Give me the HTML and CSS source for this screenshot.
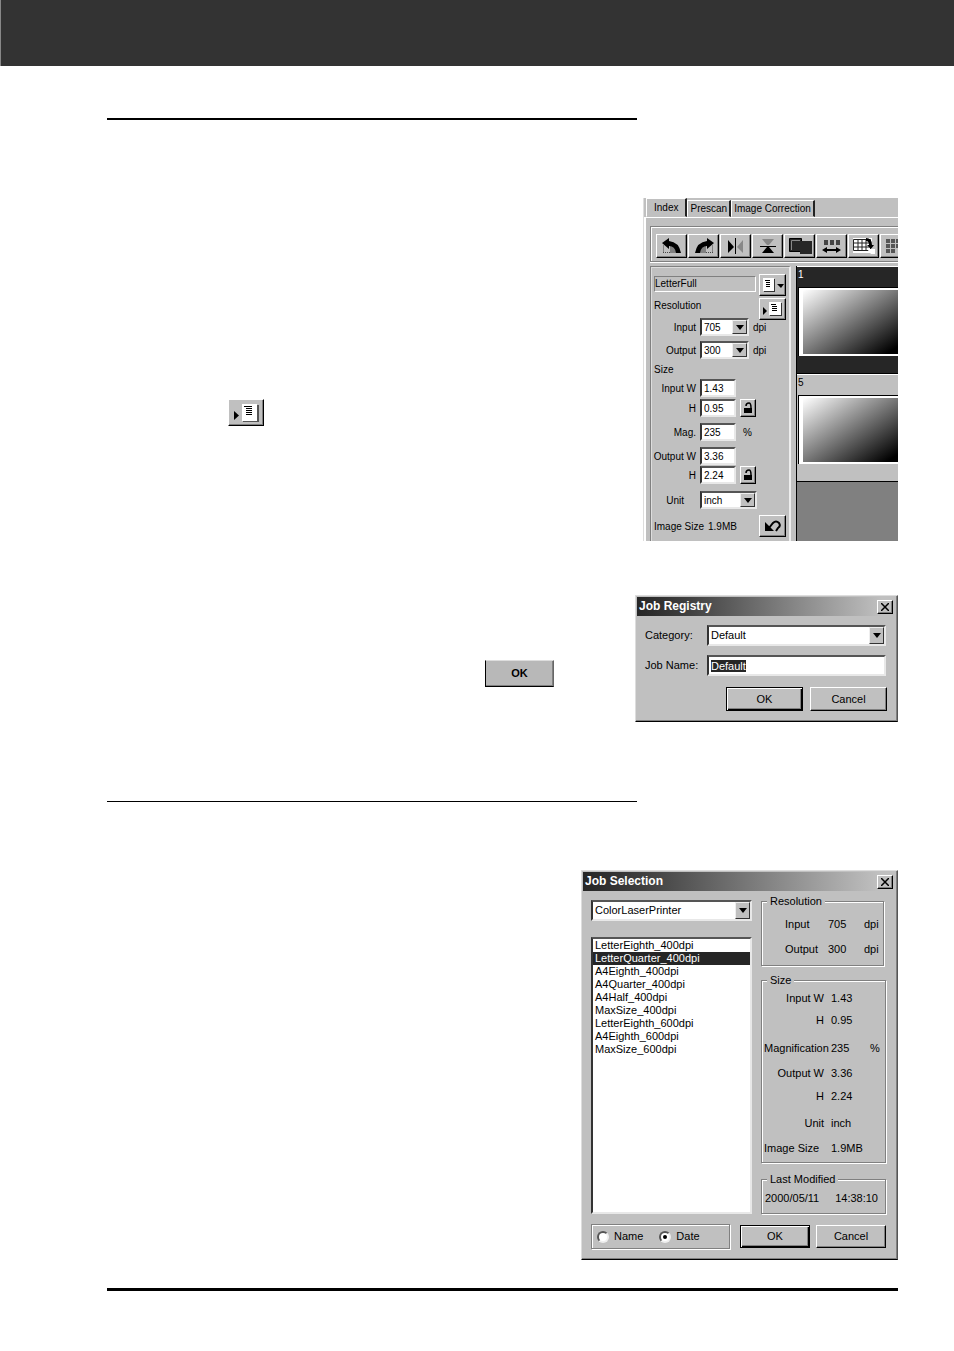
FILE: index.html
```html
<!DOCTYPE html>
<html lang="en">
<head>
    <meta charset="UTF-8">
    <meta name="viewport" content="width=device-width, initial-scale=1.0">
    <title>Job Registry / Job Selection</title>
    <link rel="stylesheet" href="styles.css">
</head>
<body>
    <header class="page-header"></header>

    <main class="page">
        <hr class="rule rule-heading">

        <section class="row row-scan">
            <div class="column">
                <button class="button job-button" aria-label="Job registry">
                    <svg width="28" height="20" viewBox="0 0 28 20"><path d="M2 8v9l5-4.500z" fill="#000"/><path d="M10 1h15v17H10z" fill="#fff"/><path d="M25 2h2v17H11v-1h14z" fill="#555"/><path d="M12 3.500h8M14 5.500h6M14 7.500h6M14 9.500h6M14 11.500h6" stroke="#000"/></svg>
                </button>
            </div>

            <div class="scanner">
                <nav class="tabs">
                    <button class="tab tab-active">Index</button>
                    <button class="tab">Prescan</button>
                    <button class="tab">Image Correction</button>
                </nav>
                <div class="workspace">
                    <div class="toolbar">
                        <button class="button tool" aria-label="Rotate left">
                            <svg width="20" height="16" viewBox="0 0 20 16"><path d="M8 15V7q6 1 7 8z" fill="#808080"/><path d="M1.500 14.500V6.500M1 14.500h7" stroke="#444" stroke-dasharray="1 1"/><path d="M0 5l7-5v3q10 1 12 12h-5q-1-7-7-7v3z"/></svg>
                        </button>
                        <button class="button tool" aria-label="Rotate right">
                            <svg width="20" height="16" viewBox="0 0 20 16"><path d="M12 15V7q-6 1-7 8z" fill="#808080"/><path d="M18.500 14.500V6.500M19 14.500h-7" stroke="#444" stroke-dasharray="1 1"/><path d="M20 5l-7-5v3Q3 4 1 15h5q1-7 7-7v3z"/></svg>
                        </button>
                        <button class="button tool" aria-label="Flip horizontally">
                            <svg width="20" height="16" viewBox="0 0 20 16"><path d="M2 2v13l6-6z"/><path d="M17 2v13l-6-6z" fill="#888"/><path d="M9.500 0v16" stroke="#000"/></svg>
                        </button>
                        <button class="button tool" aria-label="Flip vertically">
                            <svg width="20" height="16" viewBox="0 0 20 16"><path d="M4 1h12l-5 6H9z" fill="#888"/><path d="M4 15h12l-5-6H9z"/><path d="M2 8.500h16" stroke="#000"/></svg>
                        </button>
                        <button class="button tool" aria-label="Negative and positive">
                            <svg width="24" height="18" viewBox="0 0 24 18"><path d="M1.500 1.500h12v13h-12z" fill="#262626" stroke="#000"/><path d="M3.500 13V3.500H12" stroke="#888" fill="none"/><path d="M12 4h12v13H12z" fill="#262626"/></svg>
                        </button>
                        <button class="button tool" aria-label="Order">
                            <svg width="20" height="16" viewBox="0 0 20 16"><path d="M2 2h4v5H2zM8 2h4v5H8zM14 2h4v5h-4z" fill="#444"/><path d="M0 12l5-3v2h9V9l5 3-5 3v-2H5v2z"/></svg>
                        </button>
                        <button class="button tool" aria-label="Select all">
                            <svg width="24" height="18" viewBox="0 0 24 18"><path d="M1 1h19v15H1z" fill="#fff"/><path d="M1.500 2.500h17v11h-17zM6 2v12M10 2v12M14 2v12M1 6h18M1 10h18" fill="none" stroke="#222"/><path d="M14 1q6 0 6 7h2l-3 4-4-4h2q0-4-3-4z"/><path d="M15 12h8v5h-4z" fill="#fff"/></svg>
                        </button>
                        <button class="button tool" aria-label="Deselect">
                            <svg width="22" height="16" viewBox="0 0 22 16"><path d="M1 1h4v4H1zM6 1h4v4H6zM11 1h4v4h-4zM1 6h4v4H1zM6 6h4v4H6zM11 6h4v4h-4zM1 11h4v4H1zM6 11h4v4H6z" fill="#555"/></svg>
                        </button>
                    </div>

                    <div class="panes">
                        <div class="settings">
                            <div class="settings-top">
                                <div class="settings-name">
                                    <div class="job-name">LetterFull</div>
                                    <div>Resolution</div>
                                </div>
                                <div class="settings-buttons">
                                    <button class="button small-button" aria-label="Job list">
                                        <svg width="24" height="16" viewBox="0 0 24 16"><path d="M2 1h11v13H2z" fill="#fff"/><path d="M13 2h1v13H3v-1h10z" fill="#333"/><path d="M4 3.500h5M5 5.500h4M5 7.500h4M5 9.500h4" stroke="#000"/><path d="M16 7h7l-3 4z"/></svg>
                                    </button>
                                    <button class="button small-button" aria-label="Register job">
                                        <svg width="24" height="16" viewBox="0 0 24 16"><path d="M2 6v8l4-4z"/><path d="M8 1h12v13H8z" fill="#fff"/><path d="M20 2h1v13H9v-1h11z" fill="#333"/><path d="M10 3.500h5M11 5.500h5M11 7.500h5M11 9.500h5" stroke="#000"/></svg>
                                    </button>
                                </div>
                            </div>

                            <div class="settings-grid">
                                <label for="input-dpi">Input</label>
                                <span class="select select-short"><select id="input-dpi"><option>705</option></select><i class="arrow"></i></span>
                                <span>dpi</span>

                                <label for="output-dpi">Output</label>
                                <span class="select select-short"><select id="output-dpi"><option>300</option></select><i class="arrow"></i></span>
                                <span>dpi</span>

                                <span class="subtitle">Size</span>

                                <label for="input-w">Input W</label>
                                <input id="input-w" class="field" value="1.43">
                                <span></span>

                                <label for="input-h">H</label>
                                <input id="input-h" class="field" value="0.95">
                                <button class="button lock" aria-label="Lock input size">
                                    <svg width="10" height="12" viewBox="0 0 10 12"><path d="M1 6h8v5H1z"/><path d="M3 4q0-3 3-3 2 0 2 5" fill="none" stroke="#000" stroke-width="1.500"/></svg>
                                </button>

                                <label for="mag">Mag.</label>
                                <input id="mag" class="field" value="235">
                                <span class="percent">%</span>

                                <label for="output-w">Output W</label>
                                <input id="output-w" class="field" value="3.36">
                                <span></span>

                                <label for="output-h">H</label>
                                <input id="output-h" class="field" value="2.24">
                                <button class="button lock" aria-label="Lock output size">
                                    <svg width="10" height="12" viewBox="0 0 10 12"><path d="M1 6h8v5H1z"/><path d="M3 4q0-3 3-3 2 0 2 5" fill="none" stroke="#000" stroke-width="1.500"/></svg>
                                </button>

                                <label for="unit" class="unit-label">Unit</label>
                                <span class="select select-unit"><select id="unit"><option>inch</option></select><i class="arrow"></i></span>
                            </div>

                            <div class="image-size">
                                <span>Image Size</span>
                                <span>1.9MB</span>
                                <button class="button small-button undo" aria-label="Reset">
                                    <svg width="18" height="14" viewBox="0 0 18 14"><path d="M1 3v9h9z"/><path d="M5 9l4-5q3-3 6 0 2 3-1 5l-2 3" fill="none" stroke="#000" stroke-width="2"/></svg>
                                </button>
                            </div>
                        </div>

                        <div class="thumbs">
                            <div class="thumb thumb-selected">
                                <span>1</span>
                                <div class="frame"><div class="gradient"></div></div>
                            </div>
                            <div class="thumb">
                                <span>5</span>
                                <div class="frame"><div class="gradient"></div></div>
                            </div>
                        </div>
                    </div>
                </div>
            </div>
        </section>

        <section class="row row-registry">
            <div class="column column-end">
                <button class="button ok-button">OK</button>
            </div>

            <form class="dialog registry">
                <div class="titlebar">
                    <h2>Job Registry</h2>
                    <button type="button" class="button close" aria-label="Close">
                        <svg width="8" height="8" viewBox="0 0 8 8"><path d="M0 0l8 8M8 0L0 8" stroke="#000" stroke-width="1.500"/></svg>
                    </button>
                </div>
                <div class="registry-grid">
                    <label for="category">Category:</label>
                    <span class="select"><select id="category"><option>Default</option></select><i class="arrow"></i></span>
                    <label for="job-name">Job Name:</label>
                    <input id="job-name" class="field field-selected" value="Default">
                </div>
                <div class="actions">
                    <button type="button" class="button default">OK</button>
                    <button type="button" class="button">Cancel</button>
                </div>
            </form>
        </section>

        <hr class="rule rule-thin">

        <section class="row row-selection">
            <form class="dialog selection">
                <div class="titlebar">
                    <h2>Job Selection</h2>
                    <button type="button" class="button close" aria-label="Close">
                        <svg width="8" height="8" viewBox="0 0 8 8"><path d="M0 0l8 8M8 0L0 8" stroke="#000" stroke-width="1.500"/></svg>
                    </button>
                </div>
                <div class="selection-body">
                    <div class="jobs">
                        <span class="select"><select aria-label="Category"><option>ColorLaserPrinter</option></select><i class="arrow"></i></span>
                        <select class="list" size="9" aria-label="Jobs">
                            <option>LetterEighth_400dpi</option>
                            <option selected>LetterQuarter_400dpi</option>
                            <option>A4Eighth_400dpi</option>
                            <option>A4Quarter_400dpi</option>
                            <option>A4Half_400dpi</option>
                            <option>MaxSize_400dpi</option>
                            <option>LetterEighth_600dpi</option>
                            <option>A4Eighth_600dpi</option>
                            <option>MaxSize_600dpi</option>
                        </select>
                    </div>
                    <div class="details">
                        <fieldset class="group group-resolution">
                            <legend>Resolution</legend>
                            <div class="resolution-grid">
                                <span>Input</span><span>705</span><span>dpi</span>
                                <span>Output</span><span>300</span><span>dpi</span>
                            </div>
                        </fieldset>
                        <fieldset class="group group-size">
                            <legend>Size</legend>
                            <div class="size-grid">
                                <span class="label">Input W</span><span>1.43</span><span></span>
                                <span class="label">H</span><span>0.95</span><span></span>
                                <span>Magnification</span><span>235</span><span>%</span>
                                <span class="label">Output W</span><span>3.36</span><span></span>
                                <span class="label">H</span><span>2.24</span><span></span>
                                <span class="label">Unit</span><span>inch</span><span></span>
                                <span>Image Size</span><span>1.9MB</span><span></span>
                            </div>
                        </fieldset>
                        <fieldset class="group">
                            <legend>Last Modified</legend>
                            <div class="modified"><span>2000/05/11</span><span>14:38:10</span></div>
                        </fieldset>
                    </div>
                </div>
                <div class="selection-footer">
                    <div class="sort">
                        <label><input type="radio" name="sort">Name</label>
                        <label><input type="radio" name="sort" checked>Date</label>
                    </div>
                    <button type="button" class="button default">OK</button>
                    <button type="button" class="button">Cancel</button>
                </div>
            </form>
        </section>

        <hr class="rule rule-footer">
    </main>

    <script>
        // the job name starts out selected, ready to be overwritten
        document.getElementById('job-name').select();
    </script>
</body>
</html>
```
FILE: styles.css
```css
* {
    box-sizing: border-box;
}
body {
    margin: 0;
    background-color: #fff;
    color: #000;
    font-family: "Liberation Sans", Arial, sans-serif;
    font-size: 11px;
    line-height: 13px;
}
button, input, select {
    font: inherit;
    color: inherit;
    margin: 0;
    outline: none;
}
svg {
    display: block;
    flex: none;
}

/* page */
.page-header {
    height: 66px;
    background-color: #333;
    border-left: 1px solid #888;
}
.page {
    padding: 52px 56px 60px 107px;
}
.rule {
    margin: 0;
    border: 0;
    background-color: #000;
}
.rule-heading {
    width: 67%;
    height: 2px;
}
.rule-thin {
    width: 67%;
    height: 1px;
    margin-top: 79px;
}
.rule-footer {
    height: 3px;
    margin-top: 28px;
}
.row {
    display: flex;
    justify-content: flex-end;
}
.row-scan {
    margin-top: 78px;
}
.row-registry {
    margin-top: 54px;
}
.row-selection {
    margin-top: 68px;
}
.column {
    flex: 1;
    display: flex;
    align-items: flex-start;
    padding: 201px 0 0 121px;
}
.column-end {
    justify-content: flex-end;
    padding: 65px 81px 0 0;
}

/* controls */
.button {
    display: flex;
    align-items: center;
    justify-content: center;
    padding: 0;
    background-color: #c0c0c0;
    border: 1px solid;
    border-color: #fff #000 #000 #fff;
    border-radius: 0;
    box-shadow: inset -1px -1px 0 #808080;
}
.job-button {
    width: 36px;
    height: 27px;
}
.ok-button {
    width: 69px;
    height: 27px;
    border-color: #ddd #666 #000 #000;
    background-color: #b8b8b8;
    font-weight: bold;
}
.field, .select select {
    width: 100%;
    height: 18px;
    padding: 0 2px;
    background-color: #fff;
    border: 2px solid;
    border-color: #555 #e8e8e8 #e8e8e8 #333;
    border-radius: 0;
    appearance: none;
}
.select {
    position: relative;
    display: block;
}
.select select {
    display: block;
}
.arrow {
    position: absolute;
    top: 2px;
    right: 2px;
    bottom: 2px;
    width: 15px;
    display: flex;
    align-items: center;
    justify-content: center;
    background-color: #c0c0c0;
    border: 1px solid;
    border-color: #eee #333 #333 #eee;
    pointer-events: none;
}
.arrow::before {
    content: "";
    border: 4px solid transparent;
    border-top: 5px solid #000;
    border-bottom: 0;
}

/* scanner window */
.scanner {
    width: 255px;
    height: 343px;
    overflow: hidden;
    background-color: #c0c0c0;
    border-left: 1px solid #ddd;
    font-size: 10px;
}
.tabs {
    display: flex;
    align-items: flex-end;
    height: 19px;
    padding-left: 2px;
}
.tab {
    height: 17px;
    padding: 0 2px;
    background-color: #c0c0c0;
    border: 1px solid;
    border-color: #fff #222 transparent #fff;
    border-right-width: 2px;
    white-space: nowrap;
}
.tab-active {
    height: 19px;
    padding: 0 7px;
}
.workspace {
    padding: 8px 0 0 4px;
    border-top: 1px solid #fff;
    border-left: 2px solid #fff;
}
.toolbar {
    display: flex;
    gap: 1px;
    height: 36px;
    padding: 7px 0 0 5px;
    border: 1px solid #808080;
    border-right: 0;
    box-shadow: inset 1px 1px 0 #fff, 0 1px 0 #fff;
}
.tool {
    flex: none;
    width: 31px;
    height: 24px;
}
.panes {
    display: flex;
    margin-top: 4px;
}
.settings {
    width: 141px;
    height: 276px;
    padding: 7px 3px 0 3px;
    border: 1px solid #808080;
    border-right: 2px solid #eee;
    box-shadow: inset 1px 1px 0 #ddd;
}
.settings-top {
    display: flex;
    gap: 3px;
    margin-bottom: -4px;
}
.settings-name {
    flex: 1;
}
.job-name {
    height: 16px;
    margin: 2px 0 7px;
    border: 1px solid;
    border-color: #808080 #fff #fff #808080;
}
.settings-buttons {
    display: flex;
    flex-direction: column;
    gap: 2px;
}
.small-button {
    width: 27px;
    height: 22px;
}
.settings-grid {
    display: grid;
    grid-template-columns: 42px 36px 1fr;
    grid-template-rows: 22px 24px 15px 22px 18px 30px 18px 20px 30px;
    column-gap: 4px;
    align-items: center;
}
.settings-grid label {
    text-align: right;
    white-space: nowrap;
    justify-self: end;
}
.settings-grid .unit-label {
    padding-right: 12px;
}
.settings-grid .select {
    z-index: 1;
}
.select-short {
    width: 49px;
}
.select-short + span {
    padding-left: 13px;
}
.select-unit {
    width: 57px;
}
.subtitle {
    grid-column: 1 / -1;
}
.lock {
    width: 16px;
    height: 18px;
}
.percent {
    padding-left: 3px;
}
.image-size {
    display: flex;
    align-items: center;
    gap: 4px;
}
.undo {
    margin-left: auto;
}
.thumbs {
    flex: 1;
    height: 276px;
    margin-left: 5px;
    background-color: #808080;
    border-left: 1px solid #000;
}
.thumb {
    height: 108px;
    padding-left: 1px;
    background-color: #c0c0c0;
    border-top: 1px solid #fff;
    border-bottom: 1px solid #000;
}
.thumb span {
    display: block;
    height: 20px;
    padding-top: 1px;
}
.thumb-selected {
    background-color: #262626;
    color: #fff;
}
.frame {
    height: 69px;
    padding: 2px 0 2px 4px;
    background-color: #fff;
    border-top: 1px solid #000;
    border-left: 1px solid #000;
}
.gradient {
    height: 64px;
    background: linear-gradient(to bottom right, #fff, #000 94%);
}

/* dialogs */
.dialog {
    background-color: #c0c0c0;
    border: 1px solid;
    border-color: #ddd #555 #000 #ddd;
    box-shadow: inset -1px -1px 0 #808080;
}
.titlebar {
    display: flex;
    align-items: center;
    justify-content: space-between;
    height: 19px;
    margin: 1px 2px 0 1px;
    padding: 0 2px;
    background: linear-gradient(to right, #262626, #404040 20%, #c0c0c0 95%);
}
.titlebar h2 {
    margin: 0;
    color: #fff;
    font-size: 12px;
}
.close {
    width: 16px;
    height: 14px;
}
.dialog .select select, .dialog .field {
    height: 21px;
}
.selection-footer .button {
    width: 70px;
    height: 23px;
}
.button.default {
    border: 1px solid #000;
    box-shadow: inset 1px 1px 0 #fff, inset -1px -1px 0 #000, inset -2px -2px 0 #808080;
}
.registry {
    width: 263px;
    height: 127px;
}
.registry-grid {
    display: grid;
    grid-template-columns: 53px 1fr;
    gap: 9px;
    align-items: center;
    margin: 9px 11px 11px 9px;
}
.registry-grid label {
    white-space: nowrap;
}
.field-selected::selection {
    background-color: #262626;
    color: #fff;
}
.actions {
    display: flex;
    justify-content: flex-end;
    gap: 7px;
    margin-right: 10px;
}
.actions .button {
    width: 77px;
    height: 24px;
}

/* job selection */
.selection {
    width: 317px;
    height: 390px;
}
.selection-body {
    display: flex;
    gap: 9px;
    padding: 9px 11px 0 9px;
}
.jobs {
    width: 161px;
    display: flex;
    flex-direction: column;
    gap: 16px;
    flex: none;
}
.list {
    flex: 1;
    width: 100%;
    padding: 0;
    background-color: #fff;
    border: 2px solid;
    border-color: #555 #e8e8e8 #e8e8e8 #333;
    border-radius: 0;
    overflow: hidden;
}
.list option {
    height: 13px;
    min-height: 13px;
    padding: 0 2px;
    line-height: 13px;
}
.list option:checked {
    background: linear-gradient(#262626, #262626);
    color: #fff;
    -webkit-text-fill-color: #fff;
}
.details {
    flex: 1;
    min-width: 0;
    margin-top: -5px;
}
.group {
    min-width: 0;
    margin: 0;
    padding: 0 2px;
    border: 1px solid #808080;
    box-shadow: inset 1px 1px 0 #fff, 1px 1px 0 #fff;
}
.group legend {
    margin-left: 3px;
    padding: 0 3px;
    background-color: #c0c0c0;
}
.group-resolution {
    margin: 0 2px 8px 0;
}
.group-size {
    margin-bottom: 10px;
}
.resolution-grid {
    display: grid;
    grid-template-columns: 43px 36px 1fr;
    grid-template-rows: 32px 18px;
    align-items: center;
    align-content: start;
    height: 57px;
    padding-left: 21px;
}
.size-grid {
    display: grid;
    grid-template-columns: 63px 35px 1fr;
    grid-template-rows: 22px 23px 32px 18px 28px 26px 24px;
    column-gap: 4px;
    align-items: center;
    height: 175px;
}
.size-grid span {
    white-space: nowrap;
}
.size-grid .label {
    justify-self: end;
    padding-right: 3px;
}
.modified {
    display: flex;
    justify-content: space-between;
    height: 27px;
    padding: 6px 5px 0 1px;
}
.selection-footer {
    display: flex;
    align-items: center;
    gap: 6px;
    margin: 10px 11px 0 9px;
}
.sort {
    display: flex;
    align-items: center;
    gap: 16px;
    width: 139px;
    height: 25px;
    margin-right: auto;
    padding-left: 5px;
    border: 1px solid #808080;
    box-shadow: inset 1px 1px 0 #fff, 1px 1px 0 #fff;
}
.sort label {
    display: flex;
    align-items: center;
    gap: 5px;
}
.sort input {
    appearance: none;
    display: grid;
    place-items: center;
    width: 12px;
    height: 12px;
    background-color: #fff;
    border: 2px solid;
    border-color: #555 #eee #eee #555;
    border-radius: 50%;
}
.sort input:checked::before {
    content: "";
    width: 4px;
    height: 4px;
    background-color: #000;
    border-radius: 50%;
}
```
